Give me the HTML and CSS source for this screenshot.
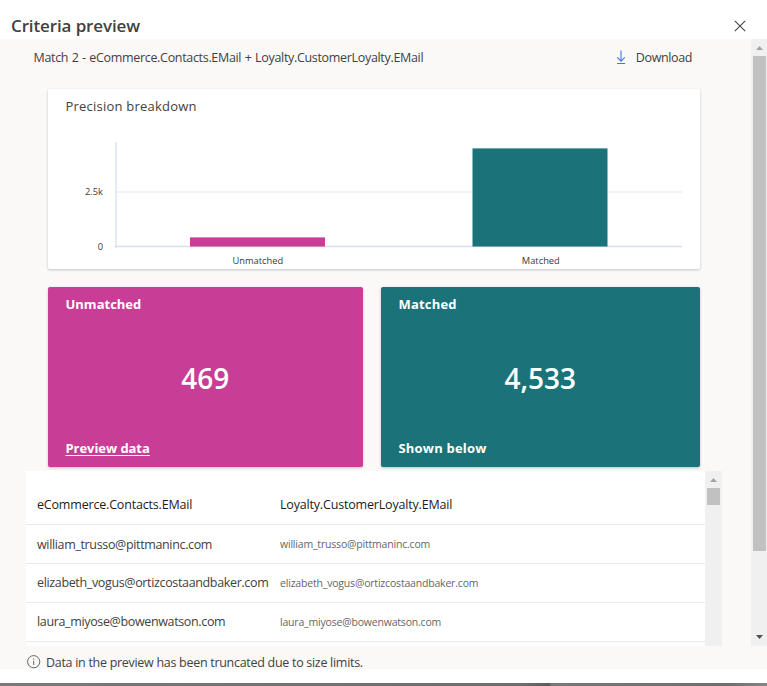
FILE: index.html
```html
<!DOCTYPE html>
<html lang="en">
<head>
<meta charset="utf-8">
<title>Criteria preview</title>
<link rel="stylesheet" href="styles.css">
</head>
<body>
<section class="dialog">
  <header class="dialog-header">
    <h1><span class="t-title">Criteria preview</span></h1>
    <svg class="close" width="12" height="12" viewBox="0 0 12 12"><path d="M.8.8 11.2 11.2M11.2.8.8 11.2" fill="none" stroke="#444" stroke-width="1.1"/></svg>
  </header>
  <div class="dialog-body">
    <main class="content">
      <div class="toolbar">
        <span class="t-match">Match 2 - eCommerce.Contacts.EMail + Loyalty.CustomerLoyalty.EMail</span>
        <span class="download">
          <svg width="10" height="15" viewBox="0 0 10 15"><path d="M5 .5V11M1.2 7.4 5 11.2 8.8 7.4M1 13.5H9.2" fill="none" stroke="#4478dc" stroke-width="1.1"/></svg>
          <span class="t-download">Download</span>
        </span>
      </div>
      <section class="card chart-card">
        <h2><span class="t-precision">Precision breakdown</span></h2>
        <svg class="chart" width="652" height="140" viewBox="0 0 652 140">
          <path d="M68 63H634" stroke="#f2f2f3" stroke-width="2"/>
          <path d="M68 13V119" stroke="#e6eaf8" stroke-width="2"/>
          <path d="M67 117.5H634" stroke="#d8ddef" stroke-width="1.4"/>
          <rect x="142" y="108.4" width="135" height="9.1" fill="#c83d95"/>
          <rect x="424.5" y="19.4" width="135" height="98.1" fill="#1b7278"/>
          <g class="axis">
            <text class="t-tick" x="55" y="66" text-anchor="end">2.5k</text>
            <text class="t-tick" x="55" y="121" text-anchor="end">0</text>
            <text class="t-cat" x="209.8" y="135" text-anchor="middle">Unmatched</text>
            <text class="t-cat" x="492.8" y="135" text-anchor="middle">Matched</text>
          </g>
        </svg>
      </section>
      <div class="tiles">
        <section class="tile unmatched">
          <h3><span class="t-tile">Unmatched</span></h3>
          <strong><span class="t-count">469</span></strong>
          <a class="t-tile t-link">Preview data</a>
        </section>
        <section class="tile matched">
          <h3><span class="t-tile t-shown">Matched</span></h3>
          <strong><span class="t-count">4,533</span></strong>
          <p><span class="t-tile t-shown">Shown below</span></p>
        </section>
      </div>
      <div class="table-wrap">
        <div class="table">
          <div class="row head"><span class="t-head">eCommerce.Contacts.EMail</span><span class="t-head">Loyalty.CustomerLoyalty.EMail</span></div>
          <div class="row first"><span class="t-cell">william_trusso@pittmaninc.com</span><span class="t-small">william_trusso@pittmaninc.com</span></div>
          <div class="row"><span class="t-cell">elizabeth_vogus@ortizcostaandbaker.com</span><span class="t-small">elizabeth_vogus@ortizcostaandbaker.com</span></div>
          <div class="row"><span class="t-cell">laura_miyose@bowenwatson.com</span><span class="t-small">laura_miyose@bowenwatson.com</span></div>
        </div>
        <div class="scrollbar inner">
          <svg width="17" height="17" viewBox="0 0 17 17"><path d="M5 11 8.5 7 12 11Z" fill="#a3a3a3"/></svg>
          <div class="thumb"></div>
        </div>
      </div>
    </main>
    <div class="scrollbar outer">
      <svg width="17" height="17" viewBox="0 0 17 17"><path d="M5 11 8.5 7 12 11Z" fill="#a3a3a3"/></svg>
      <div class="thumb"></div>
      <svg class="down" width="17" height="17" viewBox="0 0 17 17"><path d="M5 6 8.5 10 12 6Z" fill="#505050"/></svg>
    </div>
  </div>
  <footer class="note">
    <svg width="14" height="14" viewBox="0 0 14 14"><circle cx="6.7" cy="6.7" r="6.1" fill="none" stroke="#666" stroke-width="1"/><path d="M6.7 5.7V10M6.7 3.4V4.6" stroke="#666" stroke-width="1"/></svg>
    <span class="t-note">Data in the preview has been truncated due to size limits.</span>
  </footer>
</section>
<div class="backdrop"></div>
</body>
</html>
```
FILE: styles.css
```css
* { box-sizing: border-box; }
body { margin: 0; width: 767px; height: 686px; overflow: hidden; background: #fff; color: #424140; font-family: "Open Sans", "Noto Sans", sans-serif; font-size: 12.5px; }
h1, h2, h3, p { margin: 0; font-weight: inherit; font-size: inherit; }
span, a { white-space: nowrap; }
svg { display: block; flex: none; }
.dialog { height: 683px; background: #fff; }
.dialog-header { height: 39px; padding: 12px 21px 0 11px; display: flex; justify-content: space-between; align-items: flex-start; }
.dialog-header h1 { line-height: 28px; }
.close { margin-top: 8px; }
.dialog-body { height: 607px; display: flex; background: #faf9f8; }
.content { width: 751px; }
.toolbar { height: 50px; padding: 0 59px 0 33.5px; display: flex; justify-content: space-between; align-items: flex-start; line-height: 37px; }
.download { display: flex; }
.download svg { margin: 11px 10px 0 0; }
.card, .tile { border-radius: 2px; box-shadow: 0 1px 3px rgba(0,0,0,.22); }
.chart-card { width: 652px; height: 180px; margin-left: 48px; background: #fff; }
.chart-card h2 { height: 40px; padding-left: 17.5px; line-height: 35px; }
.tiles { margin: 18px 0 4px 48px; display: flex; gap: 18px; }
.tile { height: 180px; padding: 7px 18px 9px 17.5px; display: grid; grid-template-rows: 20px 1fr 20px; color: #fff; line-height: 20px; }
.tile strong { padding-top: 44px; text-align: center; font-weight: inherit; line-height: 40px; }
.tile a { text-decoration: underline; text-underline-offset: 2px; text-decoration-thickness: 1px; }
.unmatched { width: 315px; background: #c83d95; }
.matched { width: 319px; background: #1b7278; }
.table-wrap { height: 175px; width: 696px; margin-left: 26px; display: flex; overflow: hidden; }
.table { width: 679px; background: #fff; }
.row { height: 39px; padding-left: 11px; display: grid; grid-template-columns: 243px 1fr; border-bottom: 1px solid #eaeaea; line-height: 38px; }
.row.head { height: 54px; padding-top: 15px; }
.row.first .t-cell { line-height: 40px; }
.scrollbar { width: 17px; background: #f0f0f0; display: flex; flex-direction: column; }
.outer { width: 16px; overflow: hidden; }
.thumb { width: 13px; margin-left: 2px; background: #c1c1c1; }
.inner .thumb { height: 17px; }
.outer .thumb { height: 495px; }
.down { margin-top: auto; }
.note { height: 23px; padding-left: 27px; display: flex; gap: 5px; background: #faf9f8; line-height: 33px; }
.note svg { margin-top: 9px; }
.backdrop { height: 3px; background: linear-gradient(90deg, #797777 0, #6f6e6e 68%, #5a5b5a 71.7%, #777 71.8%, #6f6f6f 95%, #858585); }
.t-title { font-size: 17px; font-weight: 600; letter-spacing: -.12px; }
.t-match { font-size: 12.5px; letter-spacing: -.32px; word-spacing: .6px; }
.t-download { font-size: 12.5px; letter-spacing: -.38px; }
.t-precision { font-size: 13px; letter-spacing: .22px; }
.t-tile { font-size: 13px; font-weight: 700; }
.t-link { letter-spacing: -.05px; }
.t-shown { letter-spacing: .2px; }
.t-count { font-size: 28px; font-weight: 600; }
.t-head { font-size: 12.5px; color: #1c1c1c; font-weight: 500; letter-spacing: -.18px; }
.t-cell { font-size: 12.5px; letter-spacing: -.35px; }
.t-small { font-size: 10.5px; color: #666; letter-spacing: -.19px; }
.t-note { font-size: 12.5px; letter-spacing: -.29px; }
.axis { fill: #3a3a3a; }
.t-tick, .t-cat { font-size: 9.3px; }
```
